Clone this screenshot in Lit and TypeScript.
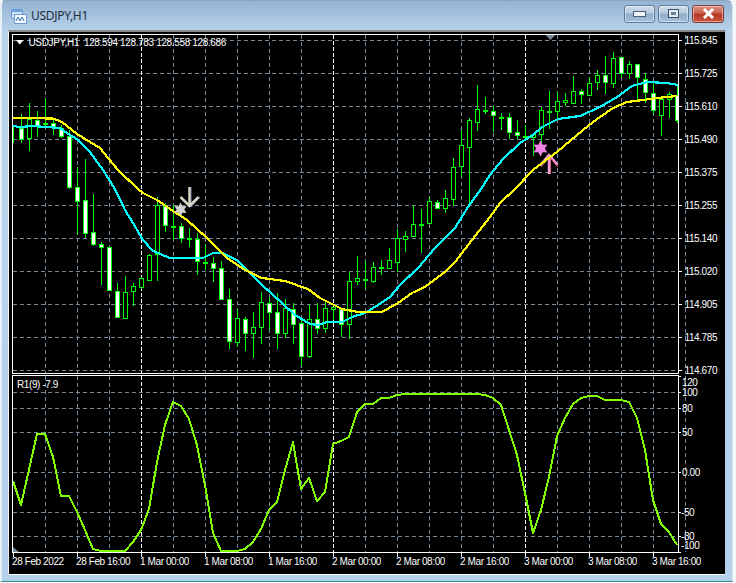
import { LitElement, html, svg, css } from "lit";
import { customElement } from "lit/decorators.js";

type C = [number, number, number, number, number];
// wickTop, wickBottom, bodyTop, bodyBottom, filled — one candle every 8px from x=13
const CANDLES: C[] = [
  [125,143,125,126,0],[114,143,128,139,1],[103,151,119,138,0],[111,137,120,125,1],[98,127,123,124,0],[118,135,123,127,1],[125,138,128,136,1],[130,189,136,187,1],
  [167,235,187,201,1],[159,238,200,233,1],[194,246,232,244,1],[242,285,244,247,1],[247,290,247,290,1],[283,318,291,317,1],[276,318,292,318,0],[283,306,286,291,0],
  [277,289,278,287,0],[254,281,255,280,0],[197,281,205,254,0],[203,232,206,225,1],[205,240,226,227,0],[223,243,226,238,1],[228,247,238,239,1],[233,275,239,261,1],
  [244,270,262,263,1],[257,282,263,268,1],[261,299,268,299,1],[289,349,299,341,1],[309,347,318,342,0],[317,351,319,333,1],[312,358,327,333,0],[292,344,302,327,0],
  [298,330,303,312,1],[293,349,312,333,1],[299,338,308,333,0],[303,344,309,324,1],[320,366,323,356,1],[305,358,319,356,0],[303,334,319,328,1],[302,333,308,328,0],
  [307,320,307,309,0],[308,337,309,324,1],[272,339,281,324,0],[256,285,278,281,0],[261,289,279,280,0],[262,283,267,281,0],[260,275,267,268,0],[248,268,260,268,0],
  [229,272,238,262,0],[231,252,236,239,0],[205,237,224,236,0],[209,253,224,225,0],[197,224,201,223,0],[200,208,202,208,1],[190,213,198,208,0],[158,206,167,199,0],
  [130,177,145,166,0],[118,205,120,147,0],[85,131,109,122,0],[97,114,110,111,0],[106,132,111,115,1],[113,130,117,118,0],[113,139,117,132,1],[120,139,132,135,1],
  [125,140,136,137,0],[133,156,134,137,0],[107,143,110,134,0],[91,129,111,112,0],[92,119,101,111,0],[93,106,100,102,0],[76,103,91,103,0],[89,104,91,94,1],
  [77,96,83,95,0],[70,90,75,82,0],[56,94,75,82,1],[52,88,58,83,0],[57,78,57,73,1],[61,79,64,73,0],[64,100,64,77,1],[73,103,79,92,1],[83,114,93,110,1],
  [98,136,99,115,0],[92,118,94,99,0],[85,123,95,120,1],
];

const YELLOW = "13,118 53,118.5 62,122 77,134 90,142 100,148 108,158 118,170 138,189 143,193 157,200 173,211 187,220 207,238 227,258 245,270 262,278 285,281 308,289 320,298 342,309 358,312 382,312 398,303 412,293 425,287 445,272 455,262 472,240 490,217 500,203 515,189 533,170 557,152 577,135 593,122 613,108 627,102 643,100 657,98 677,96";
const CYAN = "13,126 20,127 33,126 60,128 67,133 78,140 90,152 103,170 115,189 125,210 133,223 143,240 153,251 170,258 190,258 203,258 213,253 222,253 237,260 245,268 262,285 282,303 295,315 310,324 318,325 327,322 342,322 352,317 365,313 378,305 390,297 400,285 418,268 435,248 455,228 468,207 481,189 490,175 503,159 520,143 533,135 542,127 558,119 580,116 600,107 617,97 632,86 647,82 667,83 678,85";
const OSC = "13,481 21,505 37,434 45,434 53,457 61,496 69,496 77,512 85,530 93,549 101,551 125,551 133,542 141,530 149,509 157,462 165,425 173,402 181,406 189,419 197,445 205,485 213,533 221,551 237,551 245,549 253,542 261,529 269,510 277,502 285,470 293,442 301,489 309,478 317,501 325,492 333,444 341,441 349,437 357,412 365,404 373,404 381,398 389,398 397,395 405,394 477,394 485,395 493,398 501,405 509,430 517,455 525,493 533,533 541,510 549,477 557,436 565,418 573,404 581,398 589,396 597,396 605,400 621,400 629,402 637,418 645,450 653,500 661,524 669,532 677,545";

const PRICES: [string, number][] = [["115.845",40],["115.725",73],["115.610",106],["115.490",139],["115.375",172],["115.255",205],["115.140",238],["115.020",271],["114.905",304],["114.785",337],["114.670",370]];
const LEVELS: [string, number, boolean][] = [["120",376,false],["100",392,true],["80",408,true],["50",432,true],["0.00",472,true],["-50",512,true],["-80",536,true],["-100",552,false]];
const DATES = ["28 Feb 2022","28 Feb 16:00","1 Mar 00:00","1 Mar 08:00","1 Mar 16:00","2 Mar 00:00","2 Mar 08:00","2 Mar 16:00","3 Mar 00:00","3 Mar 08:00","3 Mar 16:00"];

const verticals = Array.from({ length: 21 }, (_, i) => 45 + 32 * i);
const isSeparator = (x: number) => (x - 141) % 192 === 0;
const star = (cx: number, cy: number, r: number) => {
  const pts: string[] = [];
  for (let i = 0; i < 12; i++) {
    const rad = i % 2 ? r * 0.55 : r;
    const a = (Math.PI / 6) * i;
    pts.push(`${(cx + rad * Math.sin(a)).toFixed(1)},${(cy - rad * Math.cos(a)).toFixed(1)}`);
  }
  return pts.join(" ");
};

@customElement("app-root")
export class AppRoot extends LitElement {
  static styles = css`
    :host { display: block; width: 736px; height: 583px; background: #f4f7fa; overflow: hidden; }
    .window {
      width: 733px; height: 582px; box-sizing: border-box;
      display: flex; flex-direction: column;
      background: linear-gradient(#95b4d3 0, #b9d2ea 31px, #b4d0ea 100%);
      border-left: 2px solid #e6eef6; border-right: 1px solid #dfe9f2;
      border-top: 1px solid #8fa5ba; border-bottom: 1px solid #3b8b9b;
      border-radius: 5px 6px 0 0;
    }
    .title { height: 29px; display: flex; align-items: center; padding: 0 8px 0 9px; gap: 4px; flex: none; }
    .title svg { flex: none; }
    .name { font: 12px "Noto Sans", sans-serif; letter-spacing: -0.3px; color: #1d2d3d; flex: 1; }
    .buttons { display: flex; gap: 3px; margin-top: -4px; }
    .btn { height: 18px; width: 31px; box-sizing: border-box; border: 1px solid #5f7d9b; border-radius: 3px;
      background: linear-gradient(#d2dfec, #b3c9de 45%, #8eabc8 50%, #a7c2dc);
      box-shadow: inset 0 0 0 1px rgba(255,255,255,.45);
      display: flex; align-items: center; justify-content: center; }
    .btn.close { width: 32px; border-color: #7e3a30; background: linear-gradient(#dc9384, #c8604b 45%, #b53620 50%, #c8563f); }
    .client { flex: 1; margin: 0 7px 6px 6px; background: #000; border-top: 2px solid #888; border-left: 1px solid #f0f4f8;
      border-bottom: 1px solid #fff; min-height: 0; padding: 2px 0 0 3px; box-sizing: border-box; display: flex; flex-direction: column; }
    .client svg { display: block; flex: none; overflow: visible; }
    .sub-pane { margin-top: 1px; }
    text { font: 10px "Liberation Sans", sans-serif; letter-spacing: -0.4px; fill: #fff; white-space: pre; }
    .legend { letter-spacing: -0.35px; }
    .grid { stroke: #778899; stroke-width: 1; stroke-dasharray: 4 3; fill: none; shape-rendering: crispEdges; }
    .sep { stroke: #fff; stroke-width: 1; stroke-dasharray: 4 2; fill: none; shape-rendering: crispEdges; }
    .frame { stroke: #fff; stroke-width: 1; fill: none; shape-rendering: crispEdges; }
    .wick { stroke: #00ff00; stroke-width: 1; shape-rendering: crispEdges; }
    .body { stroke: #00ff00; stroke-width: 1; shape-rendering: crispEdges; }
    .bull { fill: #000; }
    .bear { fill: #fff; }
    .ma { fill: none; stroke-width: 2.2; stroke-linejoin: round; shape-rendering: crispEdges; }
    .yellow { stroke: #ffff00; }
    .cyan { stroke: #00ffff; }
    .osc { fill: none; stroke: #7fff00; stroke-width: 2; stroke-linejoin: round; shape-rendering: crispEdges; }
    .marker { fill: #778899; }
    .gray-star { fill: #d3d3d3; }
    .pink-star { fill: #f080e4; }
    .arrow-gray { fill: none; stroke: #d6d6c6; stroke-width: 2.5; }
    .arrow-gray-edge { fill: none; stroke: #7f90b0; stroke-width: 1; }
    .arrow-pink { fill: none; stroke: #f09ae0; stroke-width: 2.5; }
    .arrow-edge { fill: none; stroke: #e06070; stroke-width: 1; }
  `;

  private grid(top: number, bottom: number) {
    return verticals.map(x => svg`<line class=${isSeparator(x) ? "sep" : "grid"} x1=${x + 0.5} x2=${x + 0.5} y1=${top} y2=${bottom}></line>`);
  }

  private candles() {
    return CANDLES.map((c, i) => {
      const x = 13 + 8 * i;
      return svg`<line class="wick" x1=${x + 0.5} x2=${x + 0.5} y1=${c[0]} y2=${c[1]}></line>
        <rect class="body ${c[4] ? "bear" : "bull"}" x=${x - 1.5} y=${c[2] + 0.5} width="4" height=${Math.max(1, c[3] - c[2])}></rect>`;
    });
  }

  private main() {
    return svg`<svg width="713" height="340" viewBox="12 34 713 340">
      <defs><clipPath id="mainClip"><rect x="13" y="35" width="665" height="338"></rect></clipPath></defs>
      ${PRICES.map(([, y]) => svg`<line class="grid" x1="13" x2="678" y1=${y + 0.5} y2=${y + 0.5}></line>`)}
      ${this.grid(35, 373)}
      <g clip-path="url(#mainClip)">
        ${this.candles()}
        <polyline class="ma cyan" points=${CYAN}></polyline>
        <polyline class="ma yellow" points=${YELLOW}></polyline>
        <polygon class="gray-star" points=${star(180.5, 209.5, 7)}></polygon>
        <path class="arrow-gray-edge" d="M191 187V207M183 199L191 207L200 197"></path>
        <path class="arrow-gray" d="M189.5 187V206M180.5 197L189.5 206L198.5 197"></path>
        <polygon class="pink-star" points=${star(540.5, 148.5, 8)}></polygon>
        <path class="arrow-pink" d="M549 174V155M540.5 165L549 155L557.5 165"></path>
        <path class="arrow-edge" d="M550.5 174V157M541 167L549.5 157L558 167"></path>
        <polyline class="ma yellow" points="533,170 557,152"></polyline>
      </g>
      <polygon class="marker" points="545.5,35 555.5,35 550.5,40"></polygon>
      <rect class="frame" x="12.5" y="34.5" width="666" height="339"></rect>
      ${PRICES.map(([p, y]) => svg`<line class="frame" x1="678" x2="682" y1=${y + 0.5} y2=${y + 0.5}></line>
        <text x="684.5" y=${y + 4}>${p}</text>`)}
      <polygon points="16,40 23.5,40 19.75,44.5" fill="#fff"></polygon>
      <text class="legend" x="28.5" y="46">USDJPY,H1  128.594 128.783 128.558 128.686</text>
    </svg>`;
  }

  private sub() {
    return svg`<svg class="sub-pane" width="713" height="199" viewBox="12 375 713 199">
      ${LEVELS.filter(l => l[2]).map(([, y]) => svg`<line class="grid" x1="13" x2="678" y1=${y + 0.5} y2=${y + 0.5}></line>`)}
      ${this.grid(376, 552)}
      <polyline class="osc" points=${OSC}></polyline>
      <polygon class="marker" points="13,547 13,552 19,552"></polygon>
      <rect class="frame" x="12.5" y="375.5" width="666" height="177"></rect>
      ${LEVELS.map(([p, y]) => svg`<line class="frame" x1="678" x2="681" y1=${y + 0.5} y2=${y + 0.5}></line>`)}
      <text x="682" y="386">120</text><text x="682" y="396">100</text><text x="682" y="412">80</text>
      <text x="682" y="436">50</text><text x="682" y="476">0.00</text><text x="681" y="516">-50</text>
      <text x="681" y="540">-80</text><text x="681" y="549">-100</text>
      ${DATES.map((d, i) => {
        const x = 13 + 64 * i;
        return svg`<line class="frame" x1=${x + 0.5} x2=${x + 0.5} y1="552" y2="557"></line>
          <text x=${x - 1} y="565">${d}</text>`;
      })}
      <text x="17" y="388">R1(9) -7.9</text>
    </svg>`;
  }

  render() {
    return html`<div class="window">
      <div class="title">
        <svg width="16" height="16" viewBox="0 0 16 16">
          <rect x="0.5" y="1.5" width="11" height="9" rx="1" fill="#cfe3f7" stroke="#5a8fd0"></rect>
          <rect x="0.5" y="1.5" width="11" height="2.5" fill="#6ea3e0"></rect>
          <rect x="3.5" y="6.5" width="12" height="9" fill="#f4f9fe" stroke="#6b9ad2"></rect>
          <path d="M5 13L7 9L9 13L11 9L13 13" fill="none" stroke="#3c6fb0" stroke-width="1"></path>
        </svg>
        <span class="name">USDJPY,H1</span>
        <div class="buttons">
          <div class="btn">
            <svg width="13" height="6" viewBox="0 0 13 6"><rect x="0.5" y="0.5" width="12" height="5" fill="#eef3f8" stroke="#4d5f72"></rect></svg>
          </div>
          <div class="btn">
            <svg width="11" height="9" viewBox="0 0 11 9"><rect x="0.5" y="0.5" width="10" height="8" fill="#e5edf5" stroke="#3f5164"></rect><rect x="3" y="3" width="5" height="3" fill="#6d8196"></rect></svg>
          </div>
          <div class="btn close">
            <svg width="13" height="11" viewBox="0 0 13 11"><path d="M2 1L11 10M11 1L2 10" stroke="#fff" stroke-width="3" fill="none"></path></svg>
          </div>
        </div>
      </div>
      <div class="client">${this.main()}${this.sub()}</div>
    </div>`;
  }
}
